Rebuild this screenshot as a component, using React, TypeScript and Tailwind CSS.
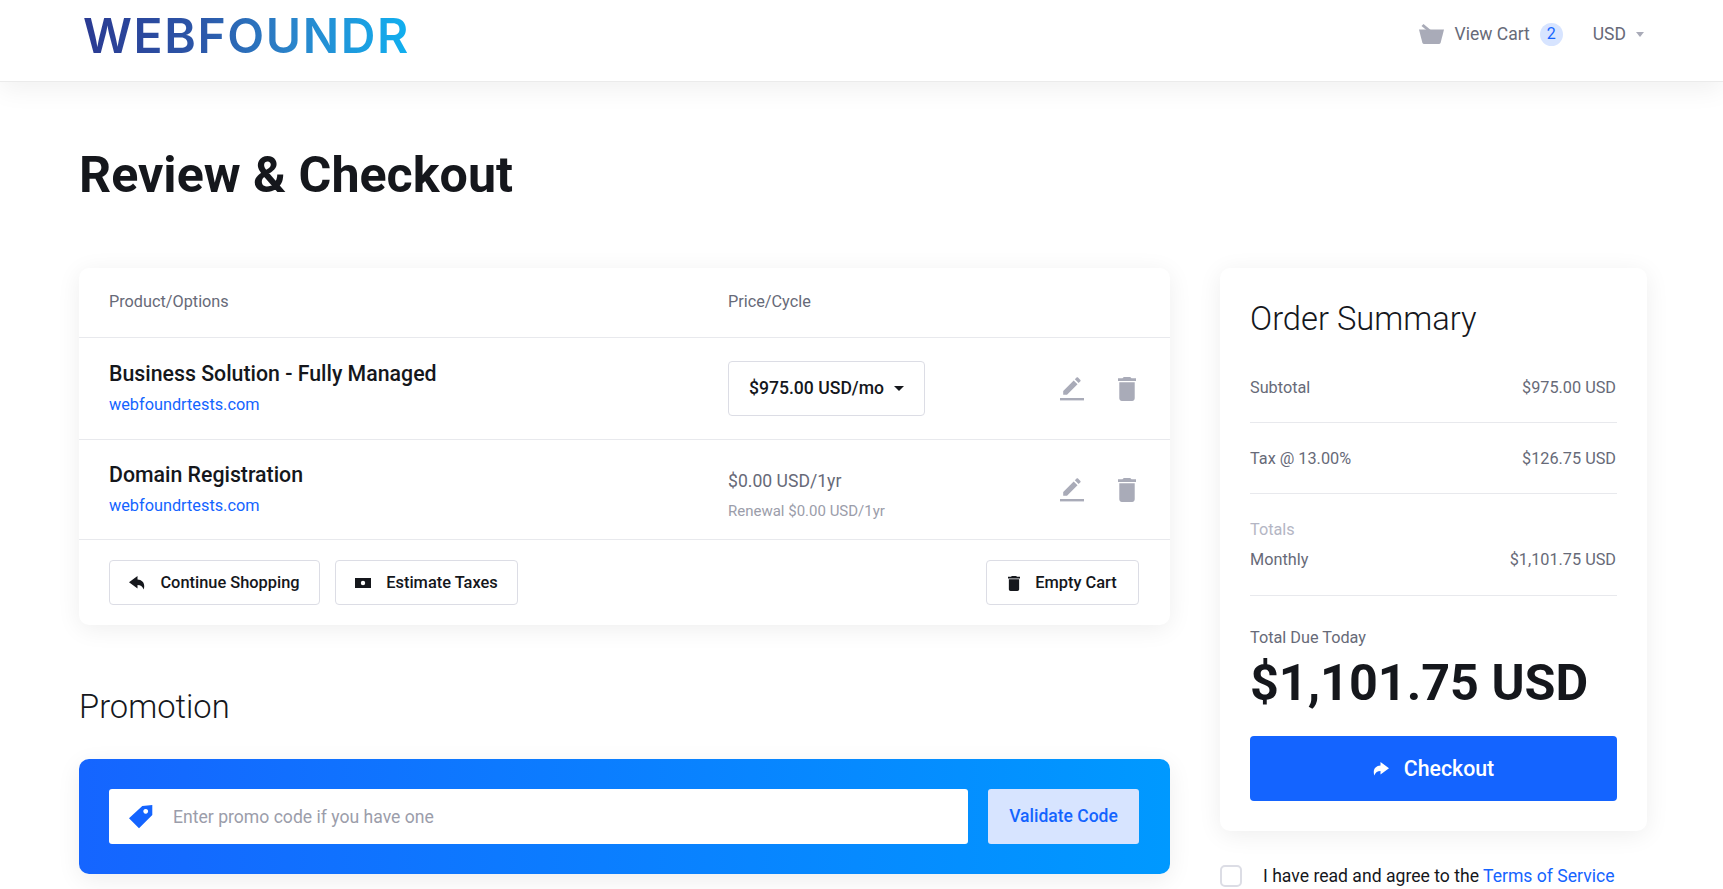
import React from "react";

const Edit = () => (
  <svg viewBox="0 0 24 24" className="w-6 h-6 fill-[#a9abb8]" preserveAspectRatio="none">
    <path d="M17.5 7.200 13.700 3.400 3.200 14v3.800H7L17.500 7.200zm2.900-2.900c.4-.4.4-1 0-1.400L18 .5c-.4-.4-1-.4-1.400 0l-1.800 1.800 3.800 3.800 1.800-1.800z" />
    <rect x="0" y="21" width="24" height="2.400" />
  </svg>
);
const Trash = ({ c = "fill-[#a9abb8]", s = "w-[18px] h-6" }: { c?: string; s?: string }) => (
  <svg viewBox="5 3 14 18" className={`${s} ${c}`} preserveAspectRatio="none">
    <path d="M6 19c0 1.100.9 2 2 2h8c1.100 0 2-.9 2-2V7H6v12zM19 4h-3.500l-1-1h-5l-1 1H5v2h14V4z" />
  </svg>
);
const Arrow = ({ c }: { c: string }) => (
  <svg viewBox="0 0 16 14" className={c}>
    <path d="M8.500 0 0 6.300 8.500 12.500V9c3 0 5 1.300 6.200 4.500C16.500 7.500 13.500 3.800 8.500 3.500V0z" />
  </svg>
);
const Actions = () => (
  <div className="flex items-center gap-[34px] mr-[34px] ml-auto">
    <Edit />
    <Trash />
  </div>
);
const OutlineButton = ({ icon, label, w }: { icon: React.ReactNode; label: string; w: string }) => (
  <button className={`h-[45px] ${w} pt-[1px] flex items-center justify-center gap-[15px] rounded-[4px] border border-[#dcdde5] bg-white text-[16.400px] font-medium text-[#15171c]`}>
    {icon}
    {label}
  </button>
);
const SummaryRow = ({ l, r }: { l: string; r: string }) => (
  <div className="flex justify-between pr-[1px] text-[16.250px] leading-[24px] text-[#676a78]">
    <span>{l}</span>
    <span>{r}</span>
  </div>
);

export default function App() {
  return (
    <div className="h-[889px] overflow-hidden bg-white font-['Roboto',sans-serif] text-[#15171c]">
      <header className="relative z-10 h-[82px] bg-white border-b border-[#ebebeb] shadow-[0_8px_24px_rgba(0,0,0,0.06)] flex items-center pl-[83px] pr-[79px]">
        <div className="mb-[9px] flex items-start">
          <span className="bg-[linear-gradient(90deg,#2a3a92_0%,#2c56a8_35%,#2a86cc_65%,#10b0f0_100%)] bg-clip-text text-transparent font-['Inter',sans-serif] font-semibold text-[48px] leading-[48px] tracking-[1.600px]">
            WEBFOUNDR
          </span>
        </div>
        <div className="ml-auto mb-[13px] flex items-center text-[#676a78] text-[17.500px]">
          <svg viewBox="0 0 25 20" className="w-[25px] h-5 fill-[#a9abb8]">
            <path d="M0 5.500h25L21.700 18.500q-.4 1.500-2 1.500H5.300q-1.600 0-2-1.500L0 5.500z" />
            <path d="M2.500 2 4.500 0l9 7.500-2.500 1.500-8.500-7z" />
          </svg>
          <span className="ml-[11px]">View Cart</span>
          <span className="ml-[10px] w-[23px] h-[23px] rounded-full bg-[#d7e4ff] text-[#1464ff] text-[16px] flex items-center justify-center">2</span>
          <span className="ml-[30px]">USD</span>
          <span className="ml-[10px] w-0 h-0 border-x-[4.500px] border-x-transparent border-t-[5px] border-t-[#a9abb8]" />
        </div>
      </header>

      <main className="pl-[79px] pr-[76px]">
        <h1 className="mt-[63px] text-[50.200px] leading-[60px] font-bold text-[#15171c]">Review &amp; Checkout</h1>
        <div className="mt-[63px] flex gap-[50px] items-start">
          <div className="w-[1091px] shrink-0">
            <section className="rounded-[10px] bg-white shadow-[0_4px_24px_rgba(0,0,0,0.07)]">
              <div className="h-[70px] border-b border-[#e8e9ed] flex items-center pl-[30px] text-[16.250px] text-[#676a78]">
                <span className="w-[619px]">Product/Options</span>
                <span>Price/Cycle</span>
              </div>
              <div className="h-[102px] border-b border-[#e8e9ed] flex items-center pl-[30px]">
                <div className="w-[619px]">
                  <div className="text-[21.300px] leading-[26px] font-medium">Business Solution - Fully Managed</div>
                  <div className="mt-[6px] text-[16.300px] leading-[24px] text-[#1464ff]">webfoundrtests.com</div>
                </div>
                <button className="h-[55px] w-[197px] rounded-[4px] border border-[#dcdde5] flex items-center justify-center gap-[10px] text-[17.600px] font-medium">
                  $975.00 USD/mo
                  <span className="w-0 h-0 border-x-[5px] border-x-transparent border-t-[5px] border-t-[#15171c]" />
                </button>
                <Actions />
              </div>
              <div className="h-[100px] border-b border-[#e8e9ed] flex items-center pl-[30px]">
                <div className="w-[619px]">
                  <div className="text-[21.300px] leading-[26px] font-medium">Domain Registration</div>
                  <div className="mt-[6px] text-[16.300px] leading-[24px] text-[#1464ff]">webfoundrtests.com</div>
                </div>
                <div className="mt-[10px]">
                  <div className="text-[17.600px] leading-[24px] text-[#676a78]">$0.00 USD/1yr</div>
                  <div className="mt-[8px] text-[15px] leading-[20px] text-[#9b9daa]">Renewal $0.00 USD/1yr</div>
                </div>
                <Actions />
              </div>
              <div className="h-[85px] flex items-center pl-[30px] pr-[31px] gap-[15px]">
                <OutlineButton w="w-[211px]" label="Continue Shopping" icon={<Arrow c="w-4 h-[14px] fill-[#15171c]" />} />
                <OutlineButton
                  w="w-[183px]"
                  label="Estimate Taxes"
                  icon={
                    <svg viewBox="0 0 16 10" className="w-4 h-[10px]">
                      <rect width="16" height="10" fill="#15171c" />
                      <circle cx="8" cy="5" r="2.200" fill="#fff" />
                    </svg>
                  }
                />
                <div className="ml-auto">
                  <OutlineButton w="w-[153px]" label="Empty Cart" icon={<Trash c="fill-[#15171c]" s="w-[12px] h-[15px]" />} />
                </div>
              </div>
            </section>

            <h2 className="mt-[62px] text-[32.700px] leading-[40px] font-light">Promotion</h2>
            <div className="mt-[32px] h-[115px] rounded-[10px] bg-[linear-gradient(90deg,#1565ff,#0099ff)] flex items-center pl-[30px] pr-[31px] gap-[20px] shadow-[0_6px_24px_rgba(0,0,0,0.07)]">
              <div className="h-[55px] flex-1 rounded-[3px] bg-white flex items-center pl-[20px] gap-[20px]">
                <svg viewBox="0 0 24 24" className="w-6 h-6 fill-[#1464ff]">
                  <path d="M0 13.300 13.300 1 23.300 0v10L10 23.300 0 13.300zM16.700 3.900a2.400 2.400 0 1 0 .01 0z" fillRule="evenodd" />
                </svg>
                <span className="pt-[2px] text-[17.600px] text-[#9b9daa]">Enter promo code if you have one</span>
              </div>
              <button className="h-[55px] w-[151px] rounded-[3px] bg-[#d7e4ff] text-[#1464ff] text-[17.500px] font-medium">Validate Code</button>
            </div>
          </div>

          <aside className="w-[427px] shrink-0">
            <section className="h-[563px] rounded-[10px] bg-white shadow-[0_4px_24px_rgba(0,0,0,0.07)] px-[30px] pt-[31px]">
              <h3 className="text-[32.700px] leading-[40px] font-light">Order Summary</h3>
              <div className="mt-[37px] pb-[22px] border-b border-[#e8e9ed]"><SummaryRow l="Subtotal" r="$975.00 USD" /></div>
              <div className="mt-[24px] pb-[22px] border-b border-[#e8e9ed]"><SummaryRow l="Tax @ 13.00%" r="$126.75 USD" /></div>
              <div className="mt-[24px] text-[16.250px] leading-[24px] text-[#b4b6c4]">Totals</div>
              <div className="mt-[6px] pb-[23px] border-b border-[#e8e9ed]"><SummaryRow l="Monthly" r="$1,101.75 USD" /></div>
              <div className="mt-[30px] text-[16.250px] leading-[24px] text-[#676a78]">Total Due Today</div>
              <div className="mt-[3px] text-[50.300px] leading-[60px] font-bold whitespace-nowrap">$1,101.75 USD</div>
              <button className="mt-[23px] h-[65px] w-full rounded-[4px] bg-[#1464ff] text-white text-[21.300px] font-medium flex items-center justify-center gap-[15px]">
                <Arrow c="w-4 h-[14px] fill-white -scale-x-100" />
                Checkout
              </button>
            </section>
            <div className="mt-[32px] flex items-center gap-[21px]">
              <span className="w-[22px] h-[22px] rounded-[5px] border-2 border-[#dcdde5] bg-white" />
              <span className="text-[17.600px] text-[#15171c]">
                I have read and agree to the <span className="text-[#1464ff]">Terms of Service</span>
              </span>
            </div>
          </aside>
        </div>
      </main>
    </div>
  );
}
